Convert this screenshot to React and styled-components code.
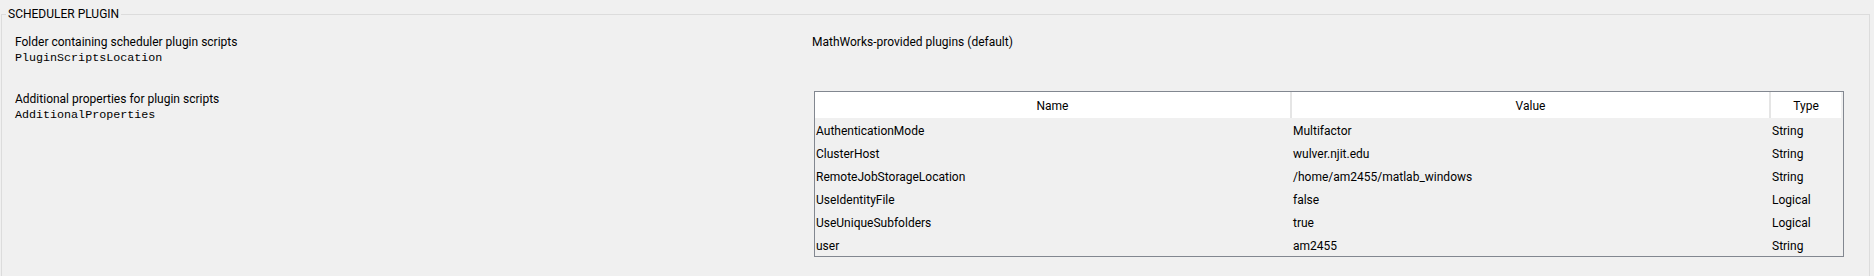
import React from "react";
import styled, { createGlobalStyle } from "styled-components";

const Global = createGlobalStyle`
  html, body { margin: 0; padding: 0; overflow: hidden; background: #f0f0f0; }
  body { font-family: Roboto, "Noto Sans", sans-serif; font-size: 12px; color: #000; }
`;

const Page = styled.div`
  height: 276px;
  padding-top: 6px;
  box-sizing: border-box;
  display: flex;
  flex-direction: column;
  overflow: hidden;
`;

const Group = styled.fieldset`
  flex: 1;
  margin: 0 4px 0 1px;
  padding: 12px 25px 0 13px;
  border: 1px solid #dcdcdc;
  border-bottom: none;
  min-width: 0;
`;

const Legend = styled.legend`
  margin-left: -9px;
  padding: 0 2px;
  line-height: 16px;
  font-size: 12px;
`;

const Layout = styled.div`
  display: grid;
  grid-template-columns: 797px 1fr;
  grid-template-rows: 57px auto;
`;

const Label = styled.div`
  display: flex;
  flex-direction: column;
  line-height: 16px;
`;

const Code = styled.span`
  font-family: "Liberation Mono", monospace;
  font-size: 11.7px;
`;

const Value = styled.div`
  line-height: 16px;
`;

const Table = styled.div`
  margin-left: 2px;
  border: 1px solid #828790;
  display: grid;
  grid-template-columns: 477px 479px 1fr;
`;

const HeadCell = styled.div`
  height: 26px;
  padding-top: 2px;
  box-sizing: border-box;
  background: #fff;
  display: flex;
  align-items: center;
  justify-content: center;
  border-right: ${(p) => (p.$last ? "2px solid #f0f0f0" : "2px solid #e5e5e5")};
`;

const Cell = styled.div`
  height: 23px;
  padding-left: 1px;
  padding-top: 3px;
  box-sizing: border-box;
  display: flex;
  align-items: center;
  white-space: nowrap;
`;

const rows = [
  ["AuthenticationMode", "Multifactor", "String"],
  ["ClusterHost", "wulver.njit.edu", "String"],
  ["RemoteJobStorageLocation", "/home/am2455/matlab_windows", "String"],
  ["UseIdentityFile", "false", "Logical"],
  ["UseUniqueSubfolders", "true", "Logical"],
  ["user", "am2455", "String"],
];

export default function App() {
  return (
    <Page>
      <Global />
      <Group>
        <Legend>SCHEDULER PLUGIN</Legend>
        <Layout>
          <Label>
            <span>Folder containing scheduler plugin scripts</span>
            <Code>PluginScriptsLocation</Code>
          </Label>
          <Value>MathWorks-provided plugins (default)</Value>
          <Label>
            <span>Additional properties for plugin scripts</span>
            <Code>AdditionalProperties</Code>
          </Label>
          <Table>
            <HeadCell>Name</HeadCell>
            <HeadCell>Value</HeadCell>
            <HeadCell $last>Type</HeadCell>
            {rows.map((r) =>
              r.map((c, i) => <Cell key={r[0] + i}>{c}</Cell>)
            )}
          </Table>
        </Layout>
      </Group>
    </Page>
  );
}
